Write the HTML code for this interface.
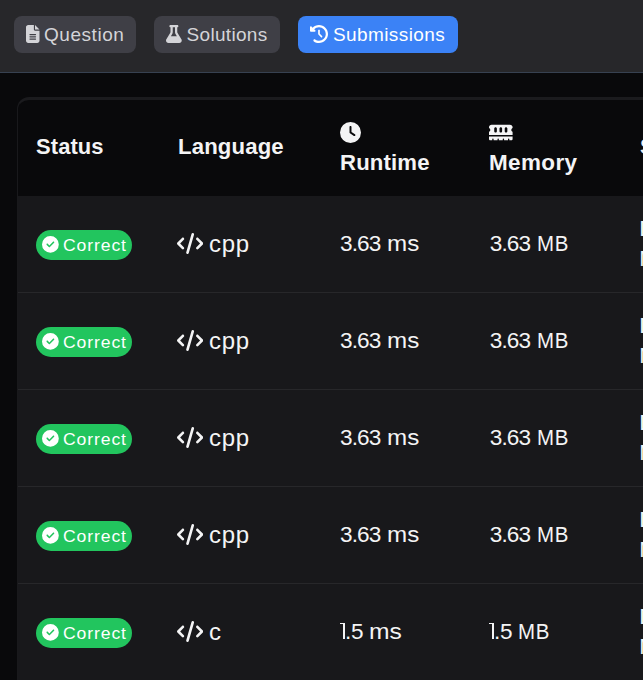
<!DOCTYPE html>
<html>
<head>
<meta charset="utf-8">
<style>
*{box-sizing:border-box;margin:0;padding:0}
html,body{width:643px;height:680px;overflow:hidden;background:#09090b}
body{font-family:"Liberation Sans",sans-serif;position:relative;color:#f4f4f5}
.abs{position:absolute}
#topbar{position:absolute;left:0;top:0;width:643px;height:73px;background:#27272a;border-bottom:1px solid #374151}
.tab{position:absolute;top:16px;height:37px;border-radius:8px;background:#3f3f46;color:#d4d4d8;font-size:19px;line-height:37px;white-space:nowrap}
.tab.active{background:#3b82f6;color:#fff}
.tab svg{position:absolute;top:9px;height:18px;fill:currentColor}
.tab span{position:absolute;top:0;left:0}
#table{position:absolute;left:17px;top:97px;width:700px;height:700px;border:1px solid #19191c;border-top:3px solid #1b1b1e;border-radius:12px 0 0 0;overflow:hidden;background:#09090b}
#inner{position:absolute;left:0;top:-1px;width:700px;height:700px}
.row{position:absolute;left:0;width:700px;height:97px;background:#18181b;border-bottom:1px solid #27272a}
.badge{position:absolute;left:18px;top:34px;width:96px;height:30px;border-radius:15px;background:#22c55e}
.badge svg{position:absolute;left:6.2px;top:6.2px;width:16.8px;height:16.8px;fill:#fff}
.badge span{position:absolute;left:27px;top:0;line-height:31px;font-size:16px;color:#fff;letter-spacing:.8px;transform:scaleX(1.1);transform-origin:0 0}
.hd{transform-origin:0 0;position:absolute;font-weight:bold;font-size:21.5px;line-height:24px;color:#f4f4f5;white-space:nowrap}
.cell{position:absolute;font-size:22px;line-height:24px;color:#f4f4f5;white-space:nowrap;top:36px}
.date{position:absolute;left:621.3px;top:18px;font-size:22px;line-height:30px;color:#f4f4f5;white-space:nowrap}
.one{display:inline-block;box-sizing:border-box;width:5.2px;height:16px;border-top:1.9px solid #f4f4f5;border-right:2.1px solid #f4f4f5;margin-right:-.2px}
.sx{display:inline-block;transform-origin:0 50%}
.code{position:absolute;left:158.8px;top:37.3px;width:26.25px;height:21px;fill:#f4f4f5}
.hicon{position:absolute;fill:#f4f4f5}
</style>
</head>
<body>
<div id="topbar">
  <div class="tab" style="left:14px;width:122px">
    <svg style="left:12px;width:13.5px" viewBox="0 0 384 512"><path d="M64 0C28.7 0 0 28.7 0 64V448c0 35.3 28.7 64 64 64H320c35.300 0 64-28.700 64-64V160H256c-17.700 0-32-14.300-32-32V0H64zM256 0V128H384L256 0zM112 256H272c8.800 0 16 7.200 16 16s-7.200 16-16 16H112c-8.800 0-16-7.200-16-16s7.200-16 16-16zm0 64H272c8.800 0 16 7.200 16 16s-7.200 16-16 16H112c-8.800 0-16-7.200-16-16s7.200-16 16-16zm0 64H272c8.800 0 16 7.200 16 16s-7.200 16-16 16H112c-8.800 0-16-7.200-16-16s7.200-16 16-16z"/></svg>
    <span id="t1" style="left:30px;letter-spacing:.55px">Question</span>
  </div>
  <div class="tab" style="left:154px;width:126px">
    <svg style="left:12px;width:15.75px" viewBox="0 0 448 512"><path d="M288 0H160 128C110.3 0 96 14.3 96 32s14.300 32 32 32V196.800c0 11.800-3.300 23.500-9.500 33.500L10.300 406.200C3.600 417.200 0 429.700 0 442.600C0 480.900 31.100 512 69.400 512H378.600c38.300 0 69.400-31.100 69.400-69.400c0-12.800-3.600-25.400-10.300-36.400L329.500 230.400c-6.200-10.100-9.500-21.700-9.500-33.500V64c17.700 0 32-14.300 32-32s-14.300-32-32-32H288zM192 196.800V64h64V196.800c0 23.700 6.600 46.900 19 67.100L309.500 320h-171L173 263.900c12.400-20.200 19-43.400 19-67.100z"/></svg>
    <span id="t2" style="left:32.6px;letter-spacing:.3px">Solutions</span>
  </div>
  <div class="tab active" style="left:298px;width:160px">
    <svg style="left:12px;width:18px" viewBox="0 0 512 512"><path d="M75 75L41 41C25.9 25.9 0 36.6 0 57.900V168c0 13.300 10.700 24 24 24H134.100c21.400 0 32.100-25.900 17-41l-30.800-30.800C155 85.500 203 64 256 64c106 0 192 86 192 192s-86 192-192 192c-40.800 0-78.600-12.700-109.700-34.400c-14.500-10.100-34.400-6.600-44.600 7.900s-6.600 34.400 7.900 44.600C151.200 495 201.700 512 256 512c141.400 0 256-114.600 256-256S397.400 0 256 0C185.300 0 121.300 28.700 75 75zm181 53c-13.300 0-24 10.700-24 24V256c0 6.400 2.500 12.500 7 17l72 72c9.400 9.400 24.600 9.400 33.900 0s9.400-24.600 0-33.900l-65-65V152c0-13.300-10.700-24-24-24z"/></svg>
    <span id="t3" style="left:35px;letter-spacing:.4px">Submissions</span>
  </div>
</div>

<div id="table"><div id="inner">
  <!-- header: table-inner coords = page - (18, 99) -->
  <div class="hd" id="h1" style="left:18px;top:36px;letter-spacing:.1px;transform:scaleX(1.02)">Status</div>
  <div class="hd" id="h2" style="left:160px;top:36px;letter-spacing:.15px;transform:scaleX(1.03)">Language</div>
  <svg class="hicon" style="left:322px;top:23px;width:21px;height:21px" viewBox="0 0 512 512"><path d="M256 0a256 256 0 1 1 0 512A256 256 0 1 1 256 0zM232 120V256c0 8 4 15.500 10.700 20l96 64c11 7.400 25.900 4.400 33.300-6.700s4.400-25.900-6.700-33.300L280 243.200V120c0-13.300-10.700-24-24-24s-24 10.700-24 24z"/></svg>
  <div class="hd" id="h3" style="left:321.6px;top:52px;letter-spacing:.15px;transform:scaleX(1.03)">Runtime</div>
  <svg class="hicon" style="left:471px;top:23px;width:23.6px;height:21px" viewBox="0 0 576 512"><path d="M64 64C28.7 64 0 92.7 0 128v7.400c0 6.800 4.400 12.600 10.100 16.300C23.300 160.300 32 175.100 32 192s-8.700 31.700-21.900 40.300C4.400 236 0 241.800 0 248.600V320H576V248.600c0-6.800-4.400-12.600-10.100-16.300C552.700 223.700 544 208.900 544 192s8.700-31.700 21.900-40.300c5.700-3.700 10.100-9.500 10.100-16.300V128c0-35.300-28.700-64-64-64H64zM576 352H0v64c0 17.700 14.300 32 32 32H80V416c0-8.800 7.200-16 16-16s16 7.200 16 16v32h96V416c0-8.800 7.200-16 16-16s16 7.200 16 16v32h96V416c0-8.800 7.200-16 16-16s16 7.200 16 16v32h96V416c0-8.800 7.200-16 16-16s16 7.200 16 16v32h48c17.700 0 32-14.300 32-32V352zM192 160v64c0 17.700-14.300 32-32 32s-32-14.300-32-32V160c0-17.700 14.300-32 32-32s32 14.300 32 32zm128 0v64c0 17.700-14.300 32-32 32s-32-14.300-32-32V160c0-17.700 14.300-32 32-32s32 14.300 32 32zm128 0v64c0 17.700-14.300 32-32 32s-32-14.300-32-32V160c0-17.700 14.300-32 32-32s32 14.300 32 32z"/></svg>
  <div class="hd" id="h4" style="left:471px;top:52px;letter-spacing:.35px;transform:scaleX(1.045)">Memory</div>
  <div class="hd" id="h5" style="left:622px;top:36px;letter-spacing:.15px;transform:scaleX(1.03)">Submitted</div>

  <div class="row" style="top:97px">
    <div class="badge"><svg viewBox="0 0 512 512"><path d="M256 512A256 256 0 1 0 256 0a256 256 0 1 0 0 512zM369 209L241 337c-9.400 9.400-24.600 9.400-33.900 0l-64-64c-9.400-9.400-9.400-24.600 0-33.900s24.600-9.400 33.900 0l47 47L335 175c9.400-9.400 24.600-9.400 33.900 0s9.400 24.600 0 33.900z"/></svg><span>Correct</span></div>
    <svg class="code" viewBox="0 0 640 512"><path d="M392.8 1.2c-17-4.900-34.700 5-39.600 22l-128 448c-4.900 17 5 34.700 22 39.600s34.700-5 39.600-22l128-448c4.900-17-5-34.700-22-39.600zm80.600 120.100c-12.500 12.500-12.500 32.800 0 45.300L562.700 256l-89.400 89.400c-12.500 12.500-12.500 32.800 0 45.300s32.800 12.500 45.300 0l112-112c12.500-12.500 12.500-32.800 0-45.300l-112-112c-12.500-12.500-32.800-12.500-45.300 0zm-306.700 0c-12.500-12.500-32.800-12.500-45.300 0l-112 112c-12.500 12.500-12.500 32.800 0 45.300l112 112c12.500 12.500 32.800 12.500 45.300 0s12.500-32.800 0-45.300L77.300 256l89.400-89.400c12.500-12.500 12.500-32.800 0-45.300z"/></svg>
    <div class="cell lang" style="left:191px;font-size:24px;letter-spacing:.7px">cpp</div>
    <div class="cell rt" style="left:322px"><span style="font-size:22.6px;line-height:18px"><span style="letter-spacing:-.9px">3.6</span>3</span> <span class="sx" style="transform:scaleX(1.1)">ms</span></div>
    <div class="cell mem" style="left:471.7px"><span style="font-size:22.6px;line-height:18px"><span style="letter-spacing:-.85px">3.6</span>3</span> <span class="sx" style="transform:scaleX(.93)"><span style="letter-spacing:.8px">M</span>B</span></div>
    <div class="date">December 21, 2024<br>Monday 10:30 PM</div>
  </div>
  <div class="row" style="top:194px">
    <div class="badge"><svg viewBox="0 0 512 512"><path d="M256 512A256 256 0 1 0 256 0a256 256 0 1 0 0 512zM369 209L241 337c-9.400 9.400-24.600 9.400-33.900 0l-64-64c-9.400-9.400-9.400-24.600 0-33.900s24.600-9.400 33.900 0l47 47L335 175c9.400-9.400 24.600-9.400 33.900 0s9.400 24.600 0 33.900z"/></svg><span>Correct</span></div>
    <svg class="code" viewBox="0 0 640 512"><path d="M392.8 1.2c-17-4.900-34.700 5-39.600 22l-128 448c-4.900 17 5 34.700 22 39.600s34.700-5 39.600-22l128-448c4.900-17-5-34.700-22-39.600zm80.600 120.100c-12.500 12.500-12.500 32.800 0 45.300L562.700 256l-89.400 89.400c-12.500 12.500-12.500 32.800 0 45.300s32.800 12.500 45.300 0l112-112c12.500-12.500 12.500-32.800 0-45.300l-112-112c-12.500-12.500-32.800-12.500-45.300 0zm-306.700 0c-12.500-12.500-32.800-12.500-45.300 0l-112 112c-12.500 12.500-12.500 32.800 0 45.300l112 112c12.500 12.500 32.800 12.500 45.300 0s12.500-32.800 0-45.300L77.300 256l89.400-89.400c12.500-12.500 12.500-32.800 0-45.300z"/></svg>
    <div class="cell lang" style="left:191px;font-size:24px;letter-spacing:.7px">cpp</div>
    <div class="cell rt" style="left:322px"><span style="font-size:22.6px;line-height:18px"><span style="letter-spacing:-.9px">3.6</span>3</span> <span class="sx" style="transform:scaleX(1.1)">ms</span></div>
    <div class="cell mem" style="left:471.7px"><span style="font-size:22.6px;line-height:18px"><span style="letter-spacing:-.85px">3.6</span>3</span> <span class="sx" style="transform:scaleX(.93)"><span style="letter-spacing:.8px">M</span>B</span></div>
    <div class="date">December 21, 2024<br>Monday 10:30 PM</div>
  </div>
  <div class="row" style="top:291px">
    <div class="badge"><svg viewBox="0 0 512 512"><path d="M256 512A256 256 0 1 0 256 0a256 256 0 1 0 0 512zM369 209L241 337c-9.400 9.400-24.600 9.400-33.900 0l-64-64c-9.400-9.400-9.400-24.600 0-33.900s24.600-9.400 33.900 0l47 47L335 175c9.400-9.400 24.600-9.400 33.900 0s9.400 24.600 0 33.900z"/></svg><span>Correct</span></div>
    <svg class="code" viewBox="0 0 640 512"><path d="M392.8 1.2c-17-4.900-34.700 5-39.600 22l-128 448c-4.900 17 5 34.700 22 39.600s34.700-5 39.600-22l128-448c4.900-17-5-34.700-22-39.600zm80.600 120.100c-12.500 12.500-12.500 32.800 0 45.300L562.700 256l-89.400 89.400c-12.500 12.500-12.500 32.800 0 45.300s32.800 12.500 45.300 0l112-112c12.500-12.500 12.500-32.800 0-45.300l-112-112c-12.500-12.500-32.800-12.500-45.300 0zm-306.700 0c-12.500-12.500-32.800-12.500-45.300 0l-112 112c-12.500 12.500-12.500 32.800 0 45.300l112 112c12.500 12.500 32.800 12.500 45.300 0s12.500-32.800 0-45.300L77.300 256l89.400-89.400c12.500-12.500 12.500-32.800 0-45.300z"/></svg>
    <div class="cell lang" style="left:191px;font-size:24px;letter-spacing:.7px">cpp</div>
    <div class="cell rt" style="left:322px"><span style="font-size:22.6px;line-height:18px"><span style="letter-spacing:-.9px">3.6</span>3</span> <span class="sx" style="transform:scaleX(1.1)">ms</span></div>
    <div class="cell mem" style="left:471.7px"><span style="font-size:22.6px;line-height:18px"><span style="letter-spacing:-.85px">3.6</span>3</span> <span class="sx" style="transform:scaleX(.93)"><span style="letter-spacing:.8px">M</span>B</span></div>
    <div class="date">December 21, 2024<br>Monday 10:30 PM</div>
  </div>
  <div class="row" style="top:388px">
    <div class="badge"><svg viewBox="0 0 512 512"><path d="M256 512A256 256 0 1 0 256 0a256 256 0 1 0 0 512zM369 209L241 337c-9.400 9.400-24.600 9.400-33.900 0l-64-64c-9.400-9.400-9.400-24.600 0-33.900s24.600-9.400 33.900 0l47 47L335 175c9.400-9.400 24.600-9.400 33.900 0s9.400 24.600 0 33.900z"/></svg><span>Correct</span></div>
    <svg class="code" viewBox="0 0 640 512"><path d="M392.8 1.2c-17-4.900-34.700 5-39.600 22l-128 448c-4.900 17 5 34.700 22 39.600s34.700-5 39.600-22l128-448c4.900-17-5-34.700-22-39.600zm80.600 120.100c-12.500 12.500-12.500 32.800 0 45.300L562.700 256l-89.400 89.400c-12.500 12.500-12.500 32.800 0 45.300s32.800 12.500 45.300 0l112-112c12.500-12.500 12.500-32.800 0-45.300l-112-112c-12.500-12.500-32.800-12.500-45.300 0zm-306.700 0c-12.500-12.500-32.800-12.500-45.300 0l-112 112c-12.500 12.500-12.500 32.800 0 45.300l112 112c12.500 12.500 32.800 12.500 45.300 0s12.500-32.800 0-45.300L77.300 256l89.400-89.400c12.500-12.500 12.500-32.800 0-45.300z"/></svg>
    <div class="cell lang" style="left:191px;font-size:24px;letter-spacing:.7px">cpp</div>
    <div class="cell rt" style="left:322px"><span style="font-size:22.6px;line-height:18px"><span style="letter-spacing:-.9px">3.6</span>3</span> <span class="sx" style="transform:scaleX(1.1)">ms</span></div>
    <div class="cell mem" style="left:471.7px"><span style="font-size:22.6px;line-height:18px"><span style="letter-spacing:-.85px">3.6</span>3</span> <span class="sx" style="transform:scaleX(.93)"><span style="letter-spacing:.8px">M</span>B</span></div>
    <div class="date">December 21, 2024<br>Monday 10:30 PM</div>
  </div>
  <div class="row" style="top:485px">
    <div class="badge"><svg viewBox="0 0 512 512"><path d="M256 512A256 256 0 1 0 256 0a256 256 0 1 0 0 512zM369 209L241 337c-9.400 9.400-24.600 9.400-33.900 0l-64-64c-9.400-9.400-9.400-24.600 0-33.900s24.600-9.400 33.900 0l47 47L335 175c9.400-9.400 24.600-9.400 33.900 0s9.400 24.600 0 33.900z"/></svg><span>Correct</span></div>
    <svg class="code" viewBox="0 0 640 512"><path d="M392.8 1.2c-17-4.900-34.700 5-39.600 22l-128 448c-4.900 17 5 34.700 22 39.600s34.700-5 39.600-22l128-448c4.900-17-5-34.700-22-39.600zm80.600 120.100c-12.500 12.500-12.500 32.800 0 45.300L562.700 256l-89.400 89.400c-12.500 12.500-12.500 32.800 0 45.300s32.800 12.500 45.300 0l112-112c12.500-12.500 12.500-32.800 0-45.300l-112-112c-12.500-12.500-32.800-12.500-45.300 0zm-306.700 0c-12.500-12.500-32.800-12.500-45.300 0l-112 112c-12.500 12.500-12.500 32.800 0 45.300l112 112c12.500 12.500 32.800 12.500 45.300 0s12.500-32.800 0-45.300L77.300 256l89.400-89.400c12.500-12.500 12.500-32.800 0-45.300z"/></svg>
    <div class="cell lang" style="left:191px;font-size:24px;letter-spacing:.7px">c</div>
    <div class="cell rt" style="left:322px"><span class="one"></span><span style="font-size:22.6px;line-height:18px;letter-spacing:-.3px">.5</span> <span class="sx" style="transform:scaleX(1.12)">ms</span></div>
    <div class="cell mem" style="left:471px"><span class="one"></span><span style="font-size:22.6px;line-height:18px;letter-spacing:-.3px">.5</span> <span class="sx" style="transform:scaleX(.93)"><span style="letter-spacing:.8px">M</span>B</span></div>
    <div class="date">December 21, 2024<br>Monday 10:30 PM</div>
  </div>
</div></div>
</body>
</html>
